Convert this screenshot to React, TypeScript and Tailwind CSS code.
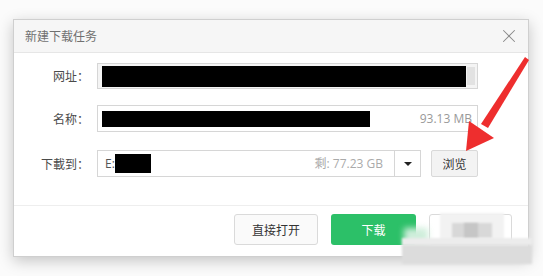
import { X } from "lucide-react";

const font = { fontFamily: '"Microsoft YaHei", "Noto Sans CJK SC", "Liberation Sans", sans-serif' };

function Label({ text }: { text: string }) {
  return (
    <div className="w-[83px] text-right text-[12px] text-[#4a4a4a] pr-[8px] leading-none">{text}</div>
  );
}

export default function App() {
  return (
    <div
      className="relative w-[543px] h-[276px] overflow-hidden bg-[#fbfbfb] pt-[19px] pl-[13px]"
      style={font}
    >
      <div className="w-[516px] h-[238px] bg-white border border-[#cfcfcf] shadow-[0_4px_14px_rgba(0,0,0,0.22)] flex flex-col">
        {/* title bar */}
        <div className="h-[33px] shrink-0 bg-[#f6f6f6] border-b border-[#e6e6e6] flex items-center justify-between pl-[11px] pr-[8px]">
          <span className="text-[12px] text-[#707070]">新建下载任务</span>
          <X className="w-[22px] h-[22px] text-[#8a8a8a]" strokeWidth={1.1} />
        </div>

        {/* form */}
        <div className="flex flex-col pt-[10px]">
          <div className="flex items-center h-[26px]">
            <Label text="网址：" />
            <div className="w-[381px] h-[26px] border border-[#d6d6d6] bg-[#f4f4f4] flex items-center pl-[4px] pr-[2px] gap-[1px]">
              <div className="w-[364px] h-[21px] bg-black" />
              <div className="w-[8px] h-[18px] bg-[#e2e2e2]" />
            </div>
          </div>

          <div className="flex items-center h-[27px] mt-[16px]">
            <Label text="名称：" />
            <div className="w-[381px] h-[27px] border border-[#d6d6d6] bg-white flex items-center pl-[4px] pr-[5px]">
              <div className="w-[268px] h-[16px] bg-black" />
              <span className="ml-auto text-[12px] text-[#999]" style={{ fontFamily: '"Open Sans", "Liberation Sans", sans-serif' }}>
                93.13 MB
              </span>
            </div>
          </div>

          <div className="flex items-center h-[27px] mt-[18px]">
            <Label text="下載到：" />
            <div className="w-[324px] h-[27px] border border-[#d6d6d6] bg-white flex items-center">
              <div className="flex-1 flex items-center pl-[7px] pr-[11px]">
                <span className="text-[12px] text-[#555]" style={{ fontFamily: '"Open Sans", "Liberation Sans", sans-serif' }}>E:</span>
                <div className="w-[36px] h-[19px] bg-black" />
                <span className="ml-auto text-[12px] text-[#aaa]" style={{ fontFamily: '"Open Sans", "Liberation Sans", "Noto Sans CJK SC", sans-serif' }}>
                  剩: 77.23 GB
                </span>
              </div>
              <div className="w-[26px] h-full border-l border-[#d6d6d6] flex items-center justify-center">
                <div className="w-0 h-0 border-l-[4px] border-r-[4px] border-t-[4px] border-l-transparent border-r-transparent border-t-[#222]" />
              </div>
            </div>
            <button className="ml-[10px] w-[47px] h-[27px] border border-[#d9d9d9] bg-[#f3f3f3] text-[12px] text-[#333] rounded-[2px]">
              浏览
            </button>
          </div>
        </div>

        {/* footer */}
        <div className="mt-auto h-[51px] border-t border-[#eeeeee] flex items-start justify-end gap-[13px] pr-[16px] pt-[8px]">
          <button className="w-[84px] h-[31px] border border-[#dadada] bg-[#fafafa] rounded-[3px] text-[12px] text-[#333]">
            直接打开
          </button>
          <button className="w-[85px] h-[31px] bg-[#2cc068] rounded-[3px] text-[12px] text-white">
            下载
          </button>
          <button className="w-[83px] h-[31px] border border-[#dadada] bg-white rounded-[3px]" />
        </div>
      </div>

      {/* red annotation arrow */}
      <svg className="absolute left-0 top-0 pointer-events-none" width="543" height="276">
        <polygon points="525,57 529,60 488,128 481,124" fill="#ee2e2e" />
        <polygon points="466,151 469,121 494,138" fill="#ee2e2e" />
      </svg>

      {/* blurred watermark */}
      <div className="absolute left-[440px] top-[213px] w-[64px] h-[28px] bg-[#f2f2f2] blur-[1px]" />
      <div className="absolute left-[452px] top-[223px] w-[40px] h-[15px] bg-[#d8d8d8] blur-[1px]" />
      <div className="absolute left-[464px] top-[223px] w-[14px] h-[15px] bg-[#c6c6c6] blur-[1px]" />
      <div className="absolute left-[404px] top-[228px] w-[24px] h-[18px] bg-[#cfeedb] blur-[3px]" />
      <div className="absolute left-[402px] top-[238px] w-[130px] h-[8px] bg-[#ececec] blur-[1px]" />
      <div className="absolute left-[402px] top-[245px] w-[130px] h-[19px] bg-[#dcdcdc] blur-[1px]" />
    </div>
  );
}
